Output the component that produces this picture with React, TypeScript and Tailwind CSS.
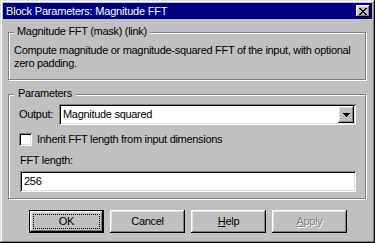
import React from "react";

const sunken =
  "shadow-[inset_1px_1px_0_#808080,inset_-1px_-1px_0_#fff,inset_2px_2px_0_#000,inset_-2px_-2px_0_#dfdfdf]";
const raised =
  "shadow-[inset_-1px_-1px_0_#000,inset_1px_1px_0_#fff,inset_-2px_-2px_0_#808080,inset_2px_2px_0_#dfdfdf]";
const etched = "border border-[#808080] shadow-[1px_1px_0_#fff,inset_1px_1px_0_#fff]";

function Btn({ children, def, disabled }: { children: React.ReactNode; def?: boolean; disabled?: boolean }) {
  if (def) {
    return (
      <div className="w-[75px] h-[23px] border border-black">
        <div className={`w-full h-full ${raised} p-[3px]`}>
          <div className="w-full h-full border border-dotted border-black flex items-center justify-center leading-[13px]">
            {children}
          </div>
        </div>
      </div>
    );
  }
  return (
    <div
      className={`w-[75px] h-[23px] ${raised} flex items-center justify-center leading-[13px] ${
        disabled ? "text-[#808080] [text-shadow:1px_1px_0_#fff]" : ""
      }`}
    >
      {children}
    </div>
  );
}

export default function App() {
  return (
    <div
      className="w-[375px] h-[243px] bg-[#c0c0c0] p-[3px] flex flex-col text-black text-[11px] tracking-[-0.3px] shadow-[inset_-1px_-1px_0_#000,inset_1px_1px_0_#dfdfdf,inset_-2px_-2px_0_#808080,inset_2px_2px_0_#fff]"
      style={{ fontFamily: '"Liberation Sans", Arial, sans-serif' }}
    >
      {/* Title bar */}
      <div className="h-[16px] bg-[#000080] flex items-center justify-between pl-[3px] pr-[2px]">
        <span className="text-white text-[11px] leading-[14px] tracking-[-0.2px]">Block Parameters: Magnitude FFT</span>
        <div className={`w-[14px] h-[12px] bg-[#c0c0c0] ${raised} flex items-center justify-center`}>
          <svg width="8" height="7" viewBox="0 0 8 7" shapeRendering="crispEdges">
            <path
              d="M0 0h2v1h-2zM6 0h2v1h-2zM1 1h2v1h-2zM5 1h2v1h-2zM2 2h4v1h-4zM3 3h2v1h-2zM2 4h4v1h-4zM1 5h2v1h-2zM5 5h2v1h-2zM0 6h2v1h-2zM6 6h2v1h-2z"
              fill="#000"
            />
          </svg>
        </div>
      </div>

      {/* Group 1 */}
      <div className={`relative mt-[13px] ml-[5px] w-[358px] h-[48px] ${etched}`}>
        <span className="absolute left-[5px] top-[-8px] px-[3px] bg-[#c0c0c0] leading-[13px] whitespace-nowrap">
          Magnitude FFT (mask) (link)
        </span>
        <div className="pt-[11px] pl-[5px] leading-[13px] whitespace-nowrap">
          Compute magnitude or magnitude-squared FFT of the input, with optional
          <br />
          zero padding.
        </div>
      </div>

      {/* Group 2 */}
      <div className={`relative mt-[14px] ml-[5px] w-[358px] h-[105px] ${etched} pl-[10px] pr-[9px]`}>
        <span className="absolute left-[5px] top-[-8px] px-[4px] bg-[#c0c0c0] leading-[13px]">Parameters</span>
        <div className="flex items-center mt-[9px] h-[21px]">
          <span className="w-[40px] leading-[13px]">Output:</span>
          <div className={`flex-1 h-[21px] bg-white ${sunken} flex items-center justify-between pl-[4px] pr-[2px]`}>
            <span className="leading-[13px]">Magnitude squared</span>
            <div className={`w-[16px] h-[17px] bg-[#c0c0c0] ${raised} flex items-center justify-center`}>
              <svg width="7" height="4" viewBox="0 0 7 4" shapeRendering="crispEdges">
                <path d="M0 0h7v1h-7zM1 1h5v1h-5zM2 2h3v1h-3zM3 3h1v1h-1z" fill="#000" />
              </svg>
            </div>
          </div>
        </div>
        <div className="flex items-center mt-[8px] h-[13px]">
          <div className={`w-[13px] h-[13px] bg-white ${sunken}`} />
          <span className="ml-[5px] leading-[13px]">Inherit FFT length from input dimensions</span>
        </div>
        <div className="mt-[8px] leading-[13px] pl-[1px]">FFT length:</div>
        <div className={`mt-[4px] ml-[1px] h-[21px] bg-white ${sunken} flex items-center pl-[4px]`}>
          <span className="leading-[13px]">256</span>
        </div>
      </div>

      {/* Buttons */}
      <div className="flex gap-[6px] mt-[11px] ml-[26px]">
        <Btn def>OK</Btn>
        <Btn>Cancel</Btn>
        <Btn>
          <span>
            <span className="underline">H</span>elp
          </span>
        </Btn>
        <Btn disabled>
          <span>
            <span className="underline">A</span>pply
          </span>
        </Btn>
      </div>
    </div>
  );
}
